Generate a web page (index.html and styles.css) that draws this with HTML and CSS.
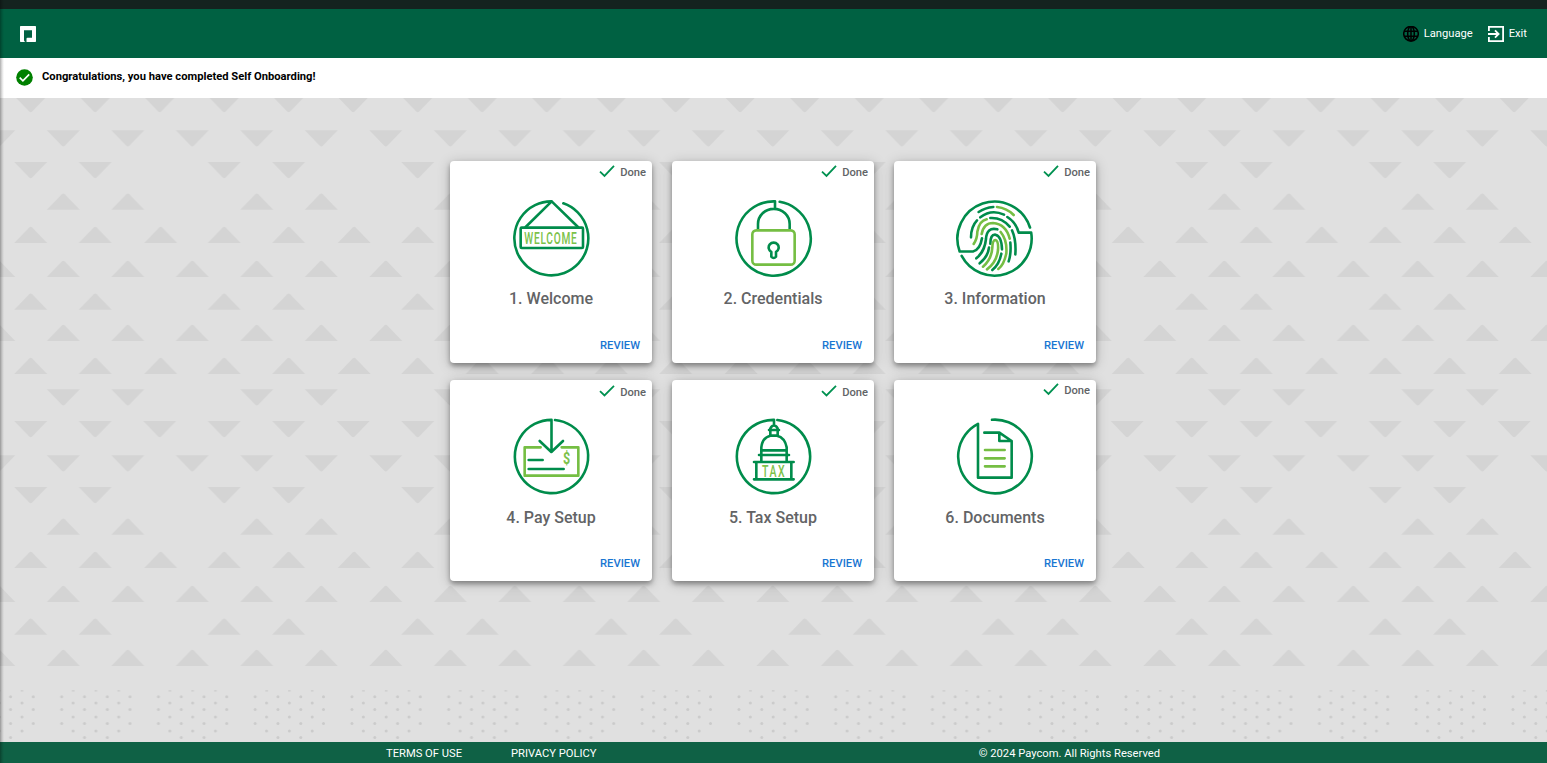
FILE: index.html
```html
<!DOCTYPE html>
<html lang="en">
<head>
<meta charset="utf-8">
<title>Self Onboarding</title>
<link rel="stylesheet" href="styles.css">
</head>
<body>
<div class="page">
  <div class="strip"></div>
  <header class="header">
    <svg class="logo" viewBox="0 0 16 16"><path fill="#fff" fill-rule="evenodd" d="M.7 0h14.600q.7 0 .7.7v14.600q0 .7-.7.7H6.500v-3.200q0-1 1-1H12V4.200H4V14.200q0 1.300 1.400 1.800H.7Q0 16 0 15.300V.7Q0 0 .7 0z"/></svg>
    <nav class="tools">
      <a class="tool"><svg class="tool-icon" viewBox="0 0 16 16" fill="none" stroke="#000" stroke-width="1.500"><circle cx="8" cy="7.700" r="7.300"/><ellipse cx="8" cy="7.700" rx="3.300" ry="7.300"/><path d="M1 5.200h14M1 10.200h14M8 .4v14.600"/></svg><span>Language</span></a>
      <a class="tool"><svg class="tool-icon" viewBox="0 0 16 16" fill="none" stroke="#fff" stroke-width="1.800"><path d="M.9 5V.9h14.200v14.200H.9V11M0 8h10M7 4.400L10.600 8 7 11.600"/></svg><span>Exit</span></a>
    </nav>
  </header>
  <div class="banner">
    <svg class="ok" viewBox="0 0 17 17"><circle cx="8.500" cy="8.500" r="8.300" fill="#008000"/><path d="M3.700 8.700l3.200 3.100 6.300-6.500" fill="none" stroke="#fff" stroke-width="1.700"/></svg>
    <span>Congratulations, you have completed Self Onboarding!</span>
  </div>
  <main class="stage">
    <svg class="backdrop" width="1547" height="644" viewBox="0 98 1547 644">
      <defs>
        <path id="d" d="M-16.500 0h33L1.500 15.500Q0 17-1.500 15.500z"/>
        <path id="u" d="M-16.500 16.500h33L1.500 1Q0-.5-1.500 1z"/>
        <pattern id="tri" width="193.500" height="325" patternUnits="userSpaceOnUse" x="-16" y="96">
          <g fill="#d4d4d4">
            <use href="#d" x="46.700" y="0"/><use href="#d" x="111.200" y="0"/><use href="#d" x="175.700" y="0"/>
            <use href="#d" x="79.300" y="34.200"/><use href="#d" x="143.800" y="34.200"/><use href="#d" x="14.800" y="34.200"/><use href="#d" x="208.300" y="34.200"/>
            <use href="#d" x="46.700" y="65.900"/><use href="#d" x="111.200" y="65.900"/>
            <use href="#u" x="79.300" y="97.300"/><use href="#u" x="143.800" y="97.300"/>
            <use href="#u" x="46.700" y="130.400"/><use href="#u" x="111.200" y="130.400"/><use href="#u" x="176.700" y="130.400"/>
            <use href="#u" x="79.300" y="164.400"/><use href="#u" x="143.800" y="164.400"/><use href="#u" x="14.800" y="164.400"/><use href="#u" x="208.300" y="164.400"/>
            <use href="#u" x="46.700" y="197.300"/><use href="#u" x="111.200" y="197.300"/>
            <use href="#u" x="79.300" y="228.600"/><use href="#u" x="143.800" y="228.600"/><use href="#u" x="14.800" y="228.600"/><use href="#u" x="208.300" y="228.600"/>
            <use href="#u" x="46.700" y="261.600"/><use href="#u" x="111.200" y="261.600"/><use href="#u" x="176.700" y="261.600"/>
            <use href="#d" x="79.300" y="293.200"/><use href="#d" x="143.800" y="293.200"/>
          </g>
        </pattern>
        <pattern id="dots" width="96.750" height="53" patternUnits="userSpaceOnUse" x="55.700" y="689">
          <g fill="#cbcbcb">
            <path d="M16.200 1.300h2.600v1.300h-2.600zM38.900 1.300h2.600v1.300h-2.600zM61.700 1.300h2.600v1.300h-2.600z"/>
            <g id="r4"><circle cx="6" cy="7.700" r="1.500"/><circle cx="28.800" cy="7.700" r="1.500"/><circle cx="51.600" cy="7.700" r="1.500"/><circle cx="74.300" cy="7.700" r="1.500"/></g>
            <use href="#r4" y="12.800"/><use href="#r4" y="26.800"/>
            <g id="r3"><circle cx="17.400" cy="14.100" r="1.500"/><circle cx="40.200" cy="14.100" r="1.500"/><circle cx="63" cy="14.100" r="1.500"/></g>
            <use href="#r3" y="14"/><use href="#r3" y="27.900"/>
            <circle cx="28.800" cy="48.400" r="1.500"/><circle cx="51.600" cy="48.400" r="1.500"/>
          </g>
        </pattern>
      </defs>
      <rect y="98" width="1547" height="570" fill="url(#tri)"/>
      <rect y="689" width="1547" height="53" fill="url(#dots)"/>
    </svg>
    <section class="cards">
      <article class="card">
        <div class="status"><svg class="tick" viewBox="0 0 16 13"><path d="M1 6.600l4.500 4.300L15 .9"/></svg><span>Done</span></div>
        <svg class="art" viewBox="213 144 240 240">
          <path class="g" d="M370 160A111 111 0 1 1 335 154L257 231M335 154l79 77"/>
          <rect class="g" x="242" y="233" width="187" height="61" rx="3"/>
          <text class="word" transform="translate(253 281.500) scale(.622 1)" font-size="49" letter-spacing="3.500">WELCOME</text>
        </svg>
        <h2 class="title">1. Welcome</h2><a class="review">REVIEW</a>
      </article>
      <article class="card">
        <div class="status"><svg class="tick" viewBox="0 0 16 13"><path d="M1 6.600l4.500 4.300L15 .9"/></svg><span>Done</span></div>
        <svg class="art" viewBox="204 144 240 240">
          <path class="g" d="M344 155.500A111.500 111.500 0 1 1 330 154.100V177M279 238v-16a47 45 0 0 1 95 0v16"/>
          <rect class="l" x="262" y="241" width="127" height="103" rx="12"/>
          <path class="g" d="M319 306a15 15 0 1 1 14 0v14q-7 8-14 0z"/>
        </svg>
        <h2 class="title">2. Credentials</h2><a class="review">REVIEW</a>
      </article>
      <article class="card">
        <div class="status"><svg class="tick" viewBox="0 0 16 13"><path d="M1 6.600l4.500 4.300L15 .9"/></svg><span>Done</span></div>
        <svg class="art" viewBox="204 144 240 240">
          <path class="g" d="M429 232.500A111.500 111.500 0 1 0 218 304.500H258Q279 300 285 265M224 317.700A111.500 111.500 0 0 0 432.600 248H395Q387 217 361 201"/>
          <path class="g" d="M275 186Q294 173 319 171M280 202Q313 176 351 194M252 262Q252 230 270 211M310 204Q345 202 368 230M375 241Q388 270 385 313M370 278Q373 310 365 334M268 325Q293 305 297 267Q299 230 331 238M278 340Q303 320 306 293M310 281Q310 253 325 254Q344 258 345 298M343 311Q337 343 316 360"/>
          <path class="l" d="M330 171Q360 174 380 195M260 282Q271 265 271 245Q277 212 299 208M284 252Q290 219 318 219Q357 222 368 266M341 246Q361 270 358 310Q351 344 334 357M288 350Q314 328 316 292Q317 270 325 270Q335 272 333 300Q329 337 300 358"/>
        </svg>
        <h2 class="title">3. Information</h2><a class="review">REVIEW</a>
      </article>
      <article class="card">
        <div class="status low"><svg class="tick" viewBox="0 0 16 13"><path d="M1 6.100l4.500 4.300L15 .9"/></svg><span>Done</span></div>
        <svg class="art" viewBox="213 141 240 240">
          <path class="g" d="M345 150A110 110 0 1 1 334.500 149.500V246M299 213l35 33 35-33M266 270h42M266 297h105"/>
          <path class="l" d="M302 232H254V317H415V232H365"/>
          <text class="word heavy" transform="translate(369 281) scale(.8 1)" font-size="47">$</text>
        </svg>
        <h2 class="title">4. Pay Setup</h2><a class="review">REVIEW</a>
      </article>
      <article class="card">
        <div class="status low"><svg class="tick" viewBox="0 0 16 13"><path d="M1 6.100l4.500 4.300L15 .9"/></svg><span>Done</span></div>
        <svg class="art" viewBox="204 141 240 240">
          <path class="g" d="M337 150.100A110 110 0 1 1 327 149.500V166M316 196V175q11-18 22 0v21M312 180h30M289 275V232q3-29 27-35h20q24 6 29 35v43M289 241h76M282 255h90M267 276h119M274 276v51M379 276v51M267 328h119"/>
          <text class="word" transform="translate(291 320) scale(.66 1)" font-size="48" letter-spacing="7">TAX</text>
        </svg>
        <h2 class="title">5. Tax Setup</h2><a class="review">REVIEW</a>
      </article>
      <article class="card">
        <div class="status"><svg class="tick" viewBox="0 0 16 13"><path d="M1 6.600l4.500 4.300L15 .9"/></svg><span>Done</span></div>
        <svg class="art" viewBox="870 141 240 240">
          <path class="g" d="M981 149.400A110.500 110.500 0 1 1 939 161.500V323H1040V213L1003 188H958M1003 188V213H1040"/>
          <path class="l" d="M960 240h59M960 265h59M960 289h59"/>
        </svg>
        <h2 class="title">6. Documents</h2><a class="review">REVIEW</a>
      </article>
    </section>
  </main>
  <footer class="footer"><a>TERMS OF USE</a><a>PRIVACY POLICY</a><span class="copy">© 2024 Paycom. All Rights Reserved</span></footer>
  <div class="edge"></div>
</div>
</body>
</html>
```
FILE: styles.css
```css
* { box-sizing: border-box; }
body { margin: 0; font-family: Roboto, "Liberation Sans", sans-serif; font-size: 11.2px; }
.page { position: relative; width: 1547px; height: 763px; overflow: hidden; display: flex; flex-direction: column; }
.strip { height: 9px; background: #14231f; }
.header { height: 49px; background: #006142; display: flex; align-items: center; justify-content: space-between; padding: 0 20px; }
.logo { width: 16px; height: 16px; }
.tools { display: flex; gap: 15px; color: #fff; font-size: 11.2px; }
.tool { display: flex; align-items: center; gap: 5px; }
.tool-icon { width: 16px; height: 16px; }
.banner { height: 40px; background: #fff; display: flex; align-items: center; gap: 9px; padding: 0 16px; font-weight: 700; color: #000; }
.banner span { padding-bottom: 3px; }
.ok { width: 17px; height: 17px; margin-bottom: 1px; }
.stage { position: relative; height: 644px; background: #e0e0e0; }
.backdrop { position: absolute; inset: 0; }
.cards { position: relative; width: 646px; margin-left: 450px; padding-top: 63px; display: grid; grid-template-columns: repeat(3, 202px); grid-template-rows: 202px 201px; column-gap: 20px; row-gap: 17px; }
.card { background: #fff; border-radius: 4px; box-shadow: 0 3px 5px rgba(0, 0, 0, .34), 0 2px 14px rgba(0, 0, 0, .2); display: flex; flex-direction: column; align-items: center; }
.status { align-self: stretch; height: 37px; display: flex; justify-content: flex-end; gap: 5px; padding: 4px 6px 0 0; font-weight: 500; color: #616366; line-height: 14px; }
.status.low { padding-top: 5px; }
.card:nth-child(6) .status { padding-top: 3px; }
.tick { width: 16px; height: 13px; fill: none; stroke: #009150; stroke-width: 1.8; overflow: visible; }
.status span { padding-top: 1px; }
.art { width: 80px; height: 80px; flex: none; overflow: visible; }
.g, .l { fill: none; stroke: #008c4b; stroke-width: 7.800; stroke-linecap: round; stroke-linejoin: round; }
.l { stroke: #75be43; }
.word { fill: #7cc24a; font-family: Roboto, sans-serif; font-weight: 500; }
.word.heavy { font-weight: 700; }
.title { margin: 11px 0 0; font-size: 16px; line-height: 20px; font-weight: 500; color: #636466; }
.review { align-self: flex-end; margin: 30px 12px 0 0; line-height: 14px; font-weight: 500; color: #1976d2; }
.card:nth-child(n+4) .review { margin-top: 29px; }
.footer { height: 21px; background: #0f6145; color: #fff; display: flex; align-items: center; padding: 1px 387px 0 386px; gap: 49px; }
.footer .copy { margin-left: auto; }
.edge { position: absolute; left: 0; top: 0; width: 4px; height: 763px; background: linear-gradient(90deg, rgba(0, 0, 0, .32), rgba(0, 0, 0, .12) 50%, transparent); }
```
